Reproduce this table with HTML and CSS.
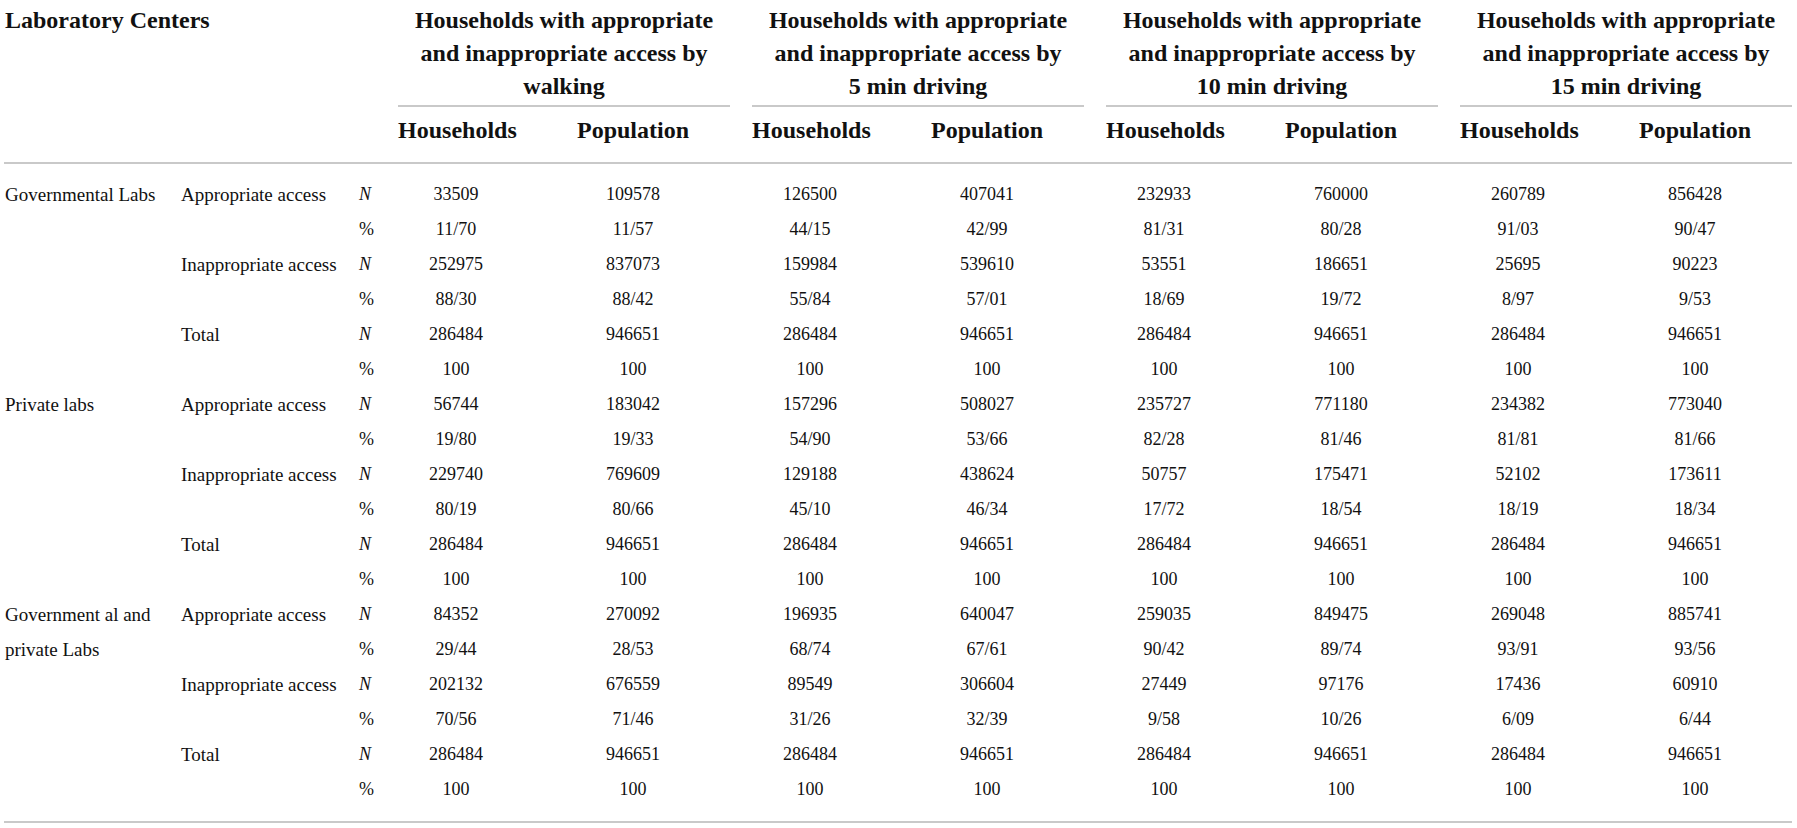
FILE: index.html
```html
<!DOCTYPE html>
<html lang="en">
<head>
    <meta charset="UTF-8">
    <meta name="viewport" content="width=device-width, initial-scale=1.0">
    <title>Access to Laboratory Centers</title>
    <link rel="stylesheet" href="styles.css">
</head>
<body>
    <table class="access-table">
        <colgroup>
            <col class="col-lab">
            <col class="col-type">
            <col class="col-stat">
            <col class="col-hh"><col class="col-pop">
            <col class="col-hh"><col class="col-pop">
            <col class="col-hh"><col class="col-pop">
            <col class="col-hh"><col class="col-pop">
        </colgroup>
        <thead>
            <tr>
                <th class="corner" colspan="3" rowspan="2">Laboratory Centers</th>
                <th class="group" colspan="2"><div>Households with appropriate<br>and inappropriate access by<br>walking</div></th>
                <th class="group" colspan="2"><div>Households with appropriate<br>and inappropriate access by<br>5 min driving</div></th>
                <th class="group" colspan="2"><div>Households with appropriate<br>and inappropriate access by<br>10 min driving</div></th>
                <th class="group" colspan="2"><div>Households with appropriate<br>and inappropriate access by<br>15 min driving</div></th>
            </tr>
            <tr class="sub">
                <th>Households</th><th>Population</th>
                <th>Households</th><th>Population</th>
                <th>Households</th><th>Population</th>
                <th>Households</th><th>Population</th>
            </tr>
        </thead>
        <tbody>
            <!-- Governmental labs -->
            <tr>
                <td class="lab" rowspan="6">Governmental Labs</td>
                <td class="type" rowspan="2">Appropriate access</td>
                <td class="stat"><i>N</i></td>
                <td>33509</td><td>109578</td><td>126500</td><td>407041</td><td>232933</td><td>760000</td><td>260789</td><td>856428</td>
            </tr>
            <tr>
                <td class="stat">%</td>
                <td>11/70</td><td>11/57</td><td>44/15</td><td>42/99</td><td>81/31</td><td>80/28</td><td>91/03</td><td>90/47</td>
            </tr>
            <tr>
                <td class="type" rowspan="2">Inappropriate access</td>
                <td class="stat"><i>N</i></td>
                <td>252975</td><td>837073</td><td>159984</td><td>539610</td><td>53551</td><td>186651</td><td>25695</td><td>90223</td>
            </tr>
            <tr>
                <td class="stat">%</td>
                <td>88/30</td><td>88/42</td><td>55/84</td><td>57/01</td><td>18/69</td><td>19/72</td><td>8/97</td><td>9/53</td>
            </tr>
            <tr>
                <td class="type" rowspan="2">Total</td>
                <td class="stat"><i>N</i></td>
                <td>286484</td><td>946651</td><td>286484</td><td>946651</td><td>286484</td><td>946651</td><td>286484</td><td>946651</td>
            </tr>
            <tr>
                <td class="stat">%</td>
                <td>100</td><td>100</td><td>100</td><td>100</td><td>100</td><td>100</td><td>100</td><td>100</td>
            </tr>

            <!-- Private labs -->
            <tr>
                <td class="lab" rowspan="6">Private labs</td>
                <td class="type" rowspan="2">Appropriate access</td>
                <td class="stat"><i>N</i></td>
                <td>56744</td><td>183042</td><td>157296</td><td>508027</td><td>235727</td><td>771180</td><td>234382</td><td>773040</td>
            </tr>
            <tr>
                <td class="stat">%</td>
                <td>19/80</td><td>19/33</td><td>54/90</td><td>53/66</td><td>82/28</td><td>81/46</td><td>81/81</td><td>81/66</td>
            </tr>
            <tr>
                <td class="type" rowspan="2">Inappropriate access</td>
                <td class="stat"><i>N</i></td>
                <td>229740</td><td>769609</td><td>129188</td><td>438624</td><td>50757</td><td>175471</td><td>52102</td><td>173611</td>
            </tr>
            <tr>
                <td class="stat">%</td>
                <td>80/19</td><td>80/66</td><td>45/10</td><td>46/34</td><td>17/72</td><td>18/54</td><td>18/19</td><td>18/34</td>
            </tr>
            <tr>
                <td class="type" rowspan="2">Total</td>
                <td class="stat"><i>N</i></td>
                <td>286484</td><td>946651</td><td>286484</td><td>946651</td><td>286484</td><td>946651</td><td>286484</td><td>946651</td>
            </tr>
            <tr>
                <td class="stat">%</td>
                <td>100</td><td>100</td><td>100</td><td>100</td><td>100</td><td>100</td><td>100</td><td>100</td>
            </tr>

            <!-- Both -->
            <tr>
                <td class="lab" rowspan="6">Government al and private Labs</td>
                <td class="type" rowspan="2">Appropriate access</td>
                <td class="stat"><i>N</i></td>
                <td>84352</td><td>270092</td><td>196935</td><td>640047</td><td>259035</td><td>849475</td><td>269048</td><td>885741</td>
            </tr>
            <tr>
                <td class="stat">%</td>
                <td>29/44</td><td>28/53</td><td>68/74</td><td>67/61</td><td>90/42</td><td>89/74</td><td>93/91</td><td>93/56</td>
            </tr>
            <tr>
                <td class="type" rowspan="2">Inappropriate access</td>
                <td class="stat"><i>N</i></td>
                <td>202132</td><td>676559</td><td>89549</td><td>306604</td><td>27449</td><td>97176</td><td>17436</td><td>60910</td>
            </tr>
            <tr>
                <td class="stat">%</td>
                <td>70/56</td><td>71/46</td><td>31/26</td><td>32/39</td><td>9/58</td><td>10/26</td><td>6/09</td><td>6/44</td>
            </tr>
            <tr>
                <td class="type" rowspan="2">Total</td>
                <td class="stat"><i>N</i></td>
                <td>286484</td><td>946651</td><td>286484</td><td>946651</td><td>286484</td><td>946651</td><td>286484</td><td>946651</td>
            </tr>
            <tr>
                <td class="stat">%</td>
                <td>100</td><td>100</td><td>100</td><td>100</td><td>100</td><td>100</td><td>100</td><td>100</td>
            </tr>
        </tbody>
    </table>
</body>
</html>
```

FILE: styles.css
```css
body {
    margin: 0 4px;
    background: #fff;
    color: #111;
    font-family: "Liberation Serif", "Times New Roman", serif;
}

.access-table {
    width: 1788px;
    table-layout: fixed;
    border-collapse: collapse;
    border-bottom: 2px solid #c9c9c9;
}

.col-lab { width: 155px; }
.col-type { width: 178px; }
.col-stat { width: 39px; }
.col-hh { width: 138px; }
.col-pop { width: 216px; }

/* header */
.access-table thead {
    border-bottom: 2px solid #c9c9c9;
}

.access-table th {
    font-size: 24px;
    font-weight: bold;
    line-height: 33px;
    padding: 4px 0 0 22px;
    text-align: center;
    vertical-align: top;
}

.access-table th.corner {
    text-align: left;
    padding-left: 1px;
}

.group div {
    padding-bottom: 2px;
    border-bottom: 2px solid #c9c9c9;
}

.sub th {
    padding-top: 7px;
    padding-bottom: 15px;
}

/* body */
.access-table td {
    font-size: 18px;
    line-height: 35px;
    padding: 0 0 0 22px;
    text-align: center;
    vertical-align: top;
    white-space: nowrap;
}

.access-table td.lab,
.access-table td.type {
    font-size: 19px;
    text-align: left;
}

.access-table td.lab {
    padding-left: 1px;
    white-space: normal;
}

.access-table td.stat {
    text-align: left;
}

.access-table tbody tr:first-child td {
    padding-top: 13px;
}

.access-table tbody tr:last-child td {
    padding-bottom: 14px;
}
```
